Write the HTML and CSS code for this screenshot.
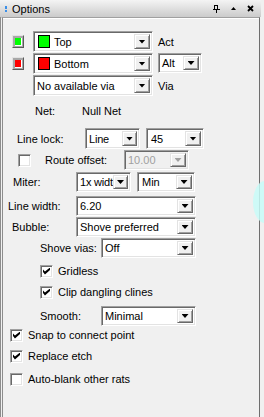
FILE: index.html
```html
<!DOCTYPE html>
<html lang="en">
<head>
  <meta charset="UTF-8">
  <title>Options</title>
  <link rel="stylesheet" href="styles.css">
</head>
<body>
  <div class="pane">
    <div class="title">
      <span class="grip"></span>
      <span class="caption">Options</span>
      <span class="tools">
        <svg width="7" height="8" viewBox="0 0 7 8"><rect x="1.5" y="0.5" width="3" height="4" fill="none" stroke="#000"/><rect x="0" y="4" width="7" height="1" fill="#000"/><rect x="3" y="5" width="1" height="3" fill="#000"/></svg>
        <svg width="5" height="3" viewBox="0 0 5 3"><polygon points="0,3 5,3 2.5,0" fill="#000"/></svg>
        <svg width="7" height="7" viewBox="0 0 7 7"><path d="M1 1 L6 6 M6 1 L1 6" stroke="#000" stroke-width="1.8"/></svg>
      </span>
    </div>

    <div class="content">
      <div class="row tall">
        <span class="colorbtn"><i class="green"></i></span>
        <div class="combo layer"><span class="val"><i class="sw green"></i>Top</span><span class="drop"></span></div>
        <span class="side">Act</span>
      </div>
      <div class="row tall gap1">
        <span class="colorbtn"><i class="red"></i></span>
        <div class="combo layer"><span class="val"><i class="sw red"></i>Bottom</span><span class="drop"></span></div>
        <div class="combo alt"><span class="val">Alt</span><span class="drop"></span></div>
      </div>
      <div class="row tall gap1">
        <span class="colorspace"></span>
        <div class="combo layer"><span class="val">No available via</span><span class="drop"></span></div>
        <span class="side">Via</span>
      </div>

      <div class="row tall gap4 net">
        <span class="netlabel">Net:</span>
        <span>Null Net</span>
      </div>

      <div class="row tall gap7">
        <span class="lbl lbl-lock">Line lock:</span>
        <div class="combo small"><span class="val">Line</span><span class="drop"></span></div>
        <div class="combo small2"><span class="val">45</span><span class="drop"></span></div>
      </div>
      <div class="row gap1 route">
        <span class="chk"></span>
        <span class="routetext">Route offset:</span>
        <div class="combo offset disabled"><span class="val">10.00</span><span class="drop"></span></div>
      </div>
      <div class="row gap2">
        <span class="lbl lbl-miter">Miter:</span>
        <div class="combo small"><span class="val">1x width</span><span class="drop"></span></div>
        <div class="combo small2"><span class="val">Min</span><span class="drop"></span></div>
      </div>
      <div class="row gap4">
        <span class="lbl lbl-lock">Line width:</span>
        <div class="combo wide"><span class="val">6.20</span><span class="drop"></span></div>
      </div>
      <div class="row gap1">
        <span class="lbl lbl-bubble">Bubble:</span>
        <div class="combo wide"><span class="val">Shove preferred</span><span class="drop"></span></div>
      </div>
      <div class="row gap1">
        <span class="lbl lbl-sub">Shove vias:</span>
        <div class="combo mid"><span class="val">Off</span><span class="drop"></span></div>
      </div>

      <div class="row check sub gap6">
        <span class="chk on"></span><span class="ctext">Gridless</span>
      </div>
      <div class="row check sub gap7">
        <span class="chk on"></span><span class="ctext">Clip dangling clines</span>
      </div>
      <div class="row gap7">
        <span class="lbl lbl-sub">Smooth:</span>
        <div class="combo mid"><span class="val">Minimal</span><span class="drop"></span></div>
      </div>

      <div class="row check top gap2">
        <span class="chk on"></span><span class="ctext">Snap to connect point</span>
      </div>
      <div class="row check top gap7">
        <span class="chk on"></span><span class="ctext">Replace etch</span>
      </div>
      <div class="row check top gap9">
        <span class="chk"></span><span class="ctext">Auto-blank other rats</span>
      </div>
    </div>

    <div class="blob"></div>
  </div>
</body>
</html>
```

FILE: styles.css
```css
body {
  margin: 0;
  font-family: "Liberation Sans", Arial, sans-serif;
  font-size: 11px;
  color: #000;
  background: #f0f0f0;
}

* {
  box-sizing: border-box;
}

.pane {
  width: 264px;
  height: 417px;
  position: relative;
  overflow: hidden;
  background: #f0f0f0;
}

/* title bar */
.title {
  width: 261px;
  height: 17px;
  display: flex;
  align-items: center;
  background: linear-gradient(#f4f4f4, #cbcbcb);
}

.grip {
  width: 2px;
  height: 6px;
  margin-left: 5px;
  background: linear-gradient(#3b8fe8 0 3px, transparent 3px 4px, #3b8fe8 4px 6px);
}

.caption {
  margin-left: 5px;
  font-size: 11px;
}

.tools {
  margin-left: auto;
  margin-right: 7px;
  display: flex;
  align-items: center;
  gap: 11px;
}

.tools svg {
  display: block;
}

/* body */
.content {
  width: 260px;
  height: 400px;
  border-left: 3px double #8c8c8c;
  border-right: 1px solid #6e6e6e;
  border-top: 1px solid #a0a0a0;
  box-shadow: inset 0 1px #fff;
  padding-top: 13px;
}

.row {
  display: flex;
  align-items: center;
  height: 20px;
}

.row.tall {
  height: 21px;
  padding-left: 9px;
}

.row.check {
  height: 14px;
}

.gap1 { margin-top: 1px; }
.gap2 { margin-top: 2px; }
.gap4 { margin-top: 4px; }
.gap6 { margin-top: 6px; }
.gap7 { margin-top: 7px; }
.gap9 { margin-top: 9px; }

/* layer color buttons */
.colorbtn {
  width: 12px;
  height: 13px;
  margin-right: 9px;
  background: #a8a8a8;
  border: 1px solid;
  border-color: #e3e3e3 #5a5a5a #5a5a5a #e3e3e3;
  display: flex;
  align-items: center;
  justify-content: center;
}

.colorbtn i {
  width: 7px;
  height: 8px;
  border-right: 1px solid #fff;
  border-bottom: 1px solid #fff;
}

.colorspace {
  width: 12px;
  margin-right: 9px;
}

.green { background: #00ff00; }
.red { background: #ff0000; }

.side {
  margin-left: 5px;
}

/* combo boxes */
.combo {
  height: 100%;
  display: flex;
  background: #fff;
  border: 1px solid;
  border-color: #a0a0a0 #fff #fff #a0a0a0;
  box-shadow: inset 1px 1px #696969, inset -1px -1px #e3e3e3;
  padding: 2px;
}

.combo .val {
  flex: 1;
  min-width: 0;
  display: flex;
  align-items: center;
  padding-left: 1px;
  white-space: nowrap;
  overflow: hidden;
}

.combo .drop {
  width: 16px;
  flex: none;
  background: #f0f0f0;
  border: 1px solid;
  border-color: #e3e3e3 #696969 #696969 #e3e3e3;
  box-shadow: inset 1px 1px #fff, inset -1px -1px #a0a0a0;
  display: flex;
  align-items: center;
  justify-content: center;
}

.combo .drop::after {
  content: "";
  width: 7px;
  height: 4px;
  background: #000;
  clip-path: polygon(0 0, 100% 0, 50% 100%);
}

.combo.disabled {
  background: #f0f0f0;
  color: #a0a0a0;
}

.combo.disabled .drop::after {
  background: #a0a0a0;
}

.sw {
  width: 12px;
  height: 13px;
  border: 1px solid #000;
  margin: 0 4px 0 1px;
}

.combo.layer { width: 120px; }
.combo.alt { width: 44px; height: 20px; margin-left: 5px; align-self: flex-start; }
.combo.small { width: 55px; }
.combo.small2 { width: 58px; margin-left: 6px; }
.combo.small .val { padding-left: 1px; letter-spacing: -0.2px; }
.combo.small .drop { width: 15px; }
.combo.small2 .val { padding-left: 2px; }
.combo.offset { width: 65px; margin-left: 0; }
.combo.wide { width: 120px; }
.combo.mid { width: 95px; }

/* labels */
.net {
  padding-left: 32px !important;
}

.netlabel {
  width: 47px;
}

.lbl {
  flex: none;
}

.lbl-lock { margin-left: 5px; width: 68px; }
.lbl-miter { margin-left: 10px; width: 63px; }
.lbl-bubble { margin-left: 9px; width: 64px; }
.lbl-sub { margin-left: 37px; width: 61px; }

/* checkboxes */
.chk {
  width: 13px;
  height: 13px;
  flex: none;
  background: #fff;
  border: 1px solid;
  border-color: #a0a0a0 #fff #fff #a0a0a0;
  box-shadow: inset 1px 1px #696969, inset -1px -1px #e3e3e3;
  position: relative;
}

.chk.on::after {
  content: "";
  position: absolute;
  left: 2px;
  top: 2px;
  width: 7px;
  height: 7px;
  background: #000;
  clip-path: polygon(0 28%, 28% 57%, 100% 0, 100% 36%, 28% 100%, 0 64%);
}

.route {
  padding-left: 15px;
}

.routetext {
  margin-left: 14px;
  width: 79px;
}

.check.sub { padding-left: 37px; }
.check.top { padding-left: 7px; }

.ctext {
  margin-left: 5px;
  white-space: nowrap;
}

/* floating highlight on the right edge */
.blob {
  position: absolute;
  left: 253px;
  top: 181px;
  width: 24px;
  height: 42px;
  border-radius: 50%;
  background: rgba(200, 252, 248, 0.85);
}
```
